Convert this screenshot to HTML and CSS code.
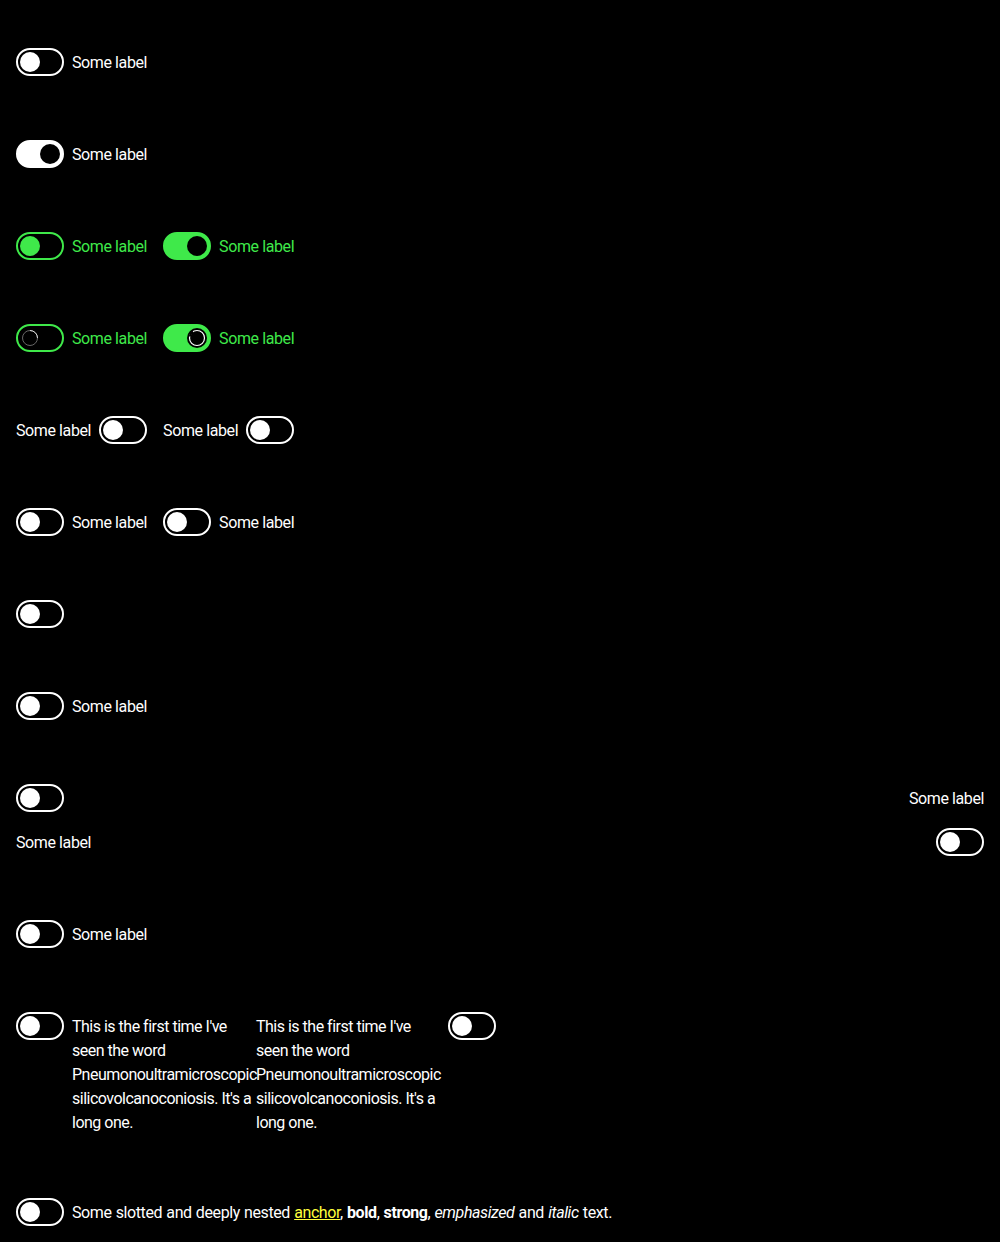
FILE: index.html
```html
<!DOCTYPE html>
<html lang="en">
<head>
<meta charset="utf-8">
<title>Switch</title>
<link rel="stylesheet" href="styles.css">
</head>
<body>
<main class="page">
  <div class="row">
    <label class="sw"><span class="track"><span class="knob"></span></span><span class="lbl">Some label</span></label>
  </div>
  <div class="row">
    <label class="sw"><span class="track on"><span class="knob"></span></span><span class="lbl">Some label</span></label>
  </div>
  <div class="row">
    <label class="sw green"><span class="track"><span class="knob"></span></span><span class="lbl">Some label</span></label>
    <label class="sw green"><span class="track on"><span class="knob"></span></span><span class="lbl">Some label</span></label>
  </div>
  <div class="row">
    <label class="sw green"><span class="track"><span class="knob spin">
      <svg viewBox="0 0 20 20" width="20" height="20"><circle cx="10" cy="10" r="7.5" fill="none" stroke="#666" stroke-width="1"/><path d="M10 2.5 A7.5 7.5 0 0 1 17.5 10" fill="none" stroke="#ddd" stroke-width="1"/></svg>
    </span></span><span class="lbl">Some label</span></label>
    <label class="sw green"><span class="track on"><span class="knob spin">
      <svg viewBox="0 0 20 20" width="20" height="20"><circle cx="10" cy="10" r="7.5" fill="none" stroke="#fff" stroke-width="1.2"/><path d="M2.7 8.5 A7.5 7.5 0 0 1 6 3.6" fill="none" stroke="#000" stroke-width="2"/></svg>
    </span></span><span class="lbl">Some label</span></label>
  </div>
  <div class="row">
    <label class="sw rev"><span class="lbl">Some label</span><span class="track"><span class="knob"></span></span></label>
    <label class="sw rev"><span class="lbl">Some label</span><span class="track"><span class="knob"></span></span></label>
  </div>
  <div class="row">
    <label class="sw"><span class="track"><span class="knob"></span></span><span class="lbl">Some label</span></label>
    <label class="sw"><span class="track"><span class="knob"></span></span><span class="lbl">Some label</span></label>
  </div>
  <div class="row">
    <label class="sw"><span class="track"><span class="knob"></span></span></label>
  </div>
  <div class="row">
    <label class="sw"><span class="track"><span class="knob"></span></span><span class="lbl">Some label</span></label>
  </div>
  <div class="row split">
    <label class="sw stack"><span class="track"><span class="knob"></span></span><span class="lbl">Some label</span></label>
    <label class="sw stack end"><span class="lbl">Some label</span><span class="track"><span class="knob"></span></span></label>
  </div>
  <div class="row">
    <label class="sw"><span class="track"><span class="knob"></span></span><span class="lbl">Some label</span></label>
  </div>
  <div class="row long">
    <label class="sw"><span class="track"><span class="knob"></span></span><span class="lbl wrap">This is the first time I've seen the word Pneumonoultramicroscopic<wbr>silicovolcanoconiosis. It's a long one.</span></label>
    <label class="sw rev"><span class="lbl wrap">This is the first time I've seen the word Pneumonoultramicroscopic<wbr>silicovolcanoconiosis. It's a long one.</span><span class="track"><span class="knob"></span></span></label>
  </div>
  <div class="row">
    <label class="sw"><span class="track"><span class="knob"></span></span><span class="lbl rich">Some slotted and deeply nested <a href="#" class="link">anchor</a>, <b>bold</b>, <strong>strong</strong>, <em>emphasized</em> and <i>italic</i> text.</span></label>
  </div>
</main>
</body>
</html>
```

FILE: styles.css
```css
html, body {
  margin: 0;
  padding: 0;
  background: #000;
}
body {
  color: #fff;
  font-family: Roboto, "Liberation Sans", sans-serif;
  font-size: 16px;
  line-height: 24px;
  letter-spacing: -0.4px;
}
.page {
  display: flex;
  flex-direction: column;
  gap: 64px;
  padding: 48px 16px 16px;
}
.row {
  display: flex;
  align-items: flex-start;
  gap: 16px;
}
.row.split {
  justify-content: space-between;
}
.row.long {
  gap: 0;
}
.sw {
  display: flex;
  align-items: flex-start;
  gap: 8px;
  cursor: pointer;
}
.sw.stack {
  flex-direction: column;
  gap: 16px;
}
.sw.stack.end {
  align-items: flex-end;
}
.track {
  flex: none;
  position: relative;
  box-sizing: border-box;
  width: 48px;
  height: 28px;
  border: 2px solid #fff;
  border-radius: 14px;
  background: #000;
}
.knob {
  position: absolute;
  top: 2px;
  left: 2px;
  width: 20px;
  height: 20px;
  border-radius: 50%;
  background: #fff;
}
.track.on {
  background: #fff;
}
.track.on .knob {
  left: 22px;
  background: #000;
}
.lbl {
  padding: 3px 0 1px;
}
.lbl.wrap {
  width: 184px;
  padding-bottom: 0;
  margin-bottom: -1px;
  letter-spacing: -0.5px;
}
.lbl.rich {
  word-spacing: 0.6px;
}
.green {
  color: #3fe94a;
}
.green .track {
  border-color: #3fe94a;
}
.green .knob {
  background: #3fe94a;
}
.green .track.on {
  background: #3fe94a;
}
.green .track.on .knob {
  background: #000;
}
.green .knob.spin {
  background: #000;
}
.knob.spin svg {
  display: block;
}
.link {
  color: #ffff3c;
  text-decoration: underline;
}
b, strong {
  font-weight: 700;
}
em, i {
  font-style: italic;
}
```
